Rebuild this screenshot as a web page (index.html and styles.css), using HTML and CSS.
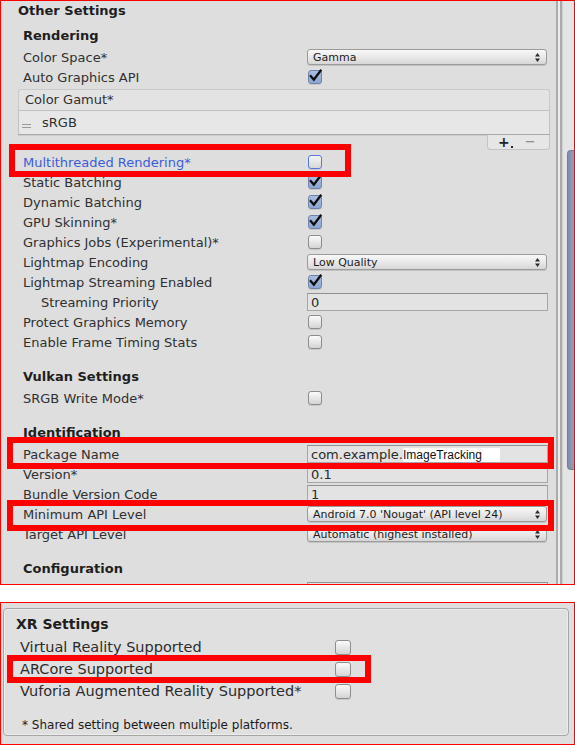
FILE: index.html
```html
<!DOCTYPE html>
<html>
<head>
<meta charset="utf-8">
<link rel="stylesheet" href="styles.css">
</head>
<body>
<div class="shot shot-top">
  <div class="inspector">
    <div class="title">Other Settings</div>
    <div class="sec first">Rendering</div>
    <div class="row"><span class="lbl">Color Space*</span><div class="dd"><span>Gamma</span><svg class="arr" viewBox="0 0 5 9" width="5" height="9"><polygon points="0,3.6 2.5,0 5,3.6"/><polygon points="0,5.4 2.5,9 5,5.4"/></svg></div></div>
    <div class="row"><span class="lbl">Auto Graphics API</span><span class="cb on"><svg viewBox="0 0 14 14" width="14" height="14"><path d="M2.8 7.2 L5.8 10.6 L12.6 1.6"/></svg></span></div>
    <div class="list">
      <div class="list-head">Color Gamut*</div>
      <div class="list-body"><span class="handle"></span><span>sRGB</span></div>
      <div class="list-foot"><span class="plus">+<i></i></span><span class="minus">−</span></div>
    </div>
    <div class="row"><span class="lbl blue">Multithreaded Rendering*</span><span class="cb focus"></span></div>
    <div class="row"><span class="lbl">Static Batching</span><span class="cb on"><svg viewBox="0 0 14 14" width="14" height="14"><path d="M2.8 7.2 L5.8 10.6 L12.6 1.6"/></svg></span></div>
    <div class="row"><span class="lbl">Dynamic Batching</span><span class="cb on"><svg viewBox="0 0 14 14" width="14" height="14"><path d="M2.8 7.2 L5.8 10.6 L12.6 1.6"/></svg></span></div>
    <div class="row"><span class="lbl">GPU Skinning*</span><span class="cb on"><svg viewBox="0 0 14 14" width="14" height="14"><path d="M2.8 7.2 L5.8 10.6 L12.6 1.6"/></svg></span></div>
    <div class="row"><span class="lbl">Graphics Jobs (Experimental)*</span><span class="cb"></span></div>
    <div class="row"><span class="lbl">Lightmap Encoding</span><div class="dd"><span>Low Quality</span><svg class="arr" viewBox="0 0 5 9" width="5" height="9"><polygon points="0,3.6 2.5,0 5,3.6"/><polygon points="0,5.4 2.5,9 5,5.4"/></svg></div></div>
    <div class="row"><span class="lbl">Lightmap Streaming Enabled</span><span class="cb on"><svg viewBox="0 0 14 14" width="14" height="14"><path d="M2.8 7.2 L5.8 10.6 L12.6 1.6"/></svg></span></div>
    <div class="row"><span class="lbl indent">Streaming Priority</span><div class="field">0</div></div>
    <div class="row"><span class="lbl">Protect Graphics Memory</span><span class="cb"></span></div>
    <div class="row"><span class="lbl">Enable Frame Timing Stats</span><span class="cb"></span></div>
    <div class="sec">Vulkan Settings</div>
    <div class="row"><span class="lbl">SRGB Write Mode*</span><span class="cb"></span></div>
    <div class="sec">Identification</div>
    <div class="row"><span class="lbl">Package Name</span><div class="field">com.example.<span class="sel">ImageTracking</span></div></div>
    <div class="row"><span class="lbl">Version*</span><div class="field">0.1</div></div>
    <div class="row"><span class="lbl">Bundle Version Code</span><div class="field">1</div></div>
    <div class="row"><span class="lbl">Minimum API Level</span><div class="dd"><span>Android 7.0 'Nougat' (API level 24)</span><svg class="arr" viewBox="0 0 5 9" width="5" height="9"><polygon points="0,3.6 2.5,0 5,3.6"/><polygon points="0,5.4 2.5,9 5,5.4"/></svg></div></div>
    <div class="row"><span class="lbl">Target API Level</span><div class="dd"><span>Automatic (highest installed)</span><svg class="arr" viewBox="0 0 5 9" width="5" height="9"><polygon points="0,3.6 2.5,0 5,3.6"/><polygon points="0,5.4 2.5,9 5,5.4"/></svg></div></div>
    <div class="sec conf">Configuration</div>
    <div class="row"><span class="lbl"></span><div class="field tall"></div></div>
  </div>
  <div class="scroll">
    <div class="sep"></div>
    <div class="track"><div class="thumb"></div></div>
  </div>
  <div class="mark m1"></div>
  <div class="mark m2"></div>
  <div class="mark m3"></div>
</div>
<div class="gap"></div>
<div class="shot shot-bottom">
  <div class="group">
    <div class="xr-head">XR Settings</div>
    <div class="xr-row"><span class="xr-lbl">Virtual Reality Supported</span><span class="cb big"></span></div>
    <div class="xr-row"><span class="xr-lbl">ARCore Supported</span><span class="cb big"></span></div>
    <div class="xr-row"><span class="xr-lbl">Vuforia Augmented Reality Supported*</span><span class="cb big"></span></div>
    <div class="note">* Shared setting between multiple platforms.</div>
  </div>
  <div class="mark m4"></div>
</div>
</body>
</html>
```
FILE: styles.css
```css
* { box-sizing: border-box; }
html, body { margin: 0; padding: 0; }
body {
  width: 575px;
  height: 745px;
  background: #ffffff;
  font-family: "DejaVu Sans", Verdana, sans-serif;
  color: #303030;
  overflow: hidden;
}
.shot {
  position: relative;
  border: 1px solid #ff0000;
  background: #dedede;
  overflow: hidden;
}
.shot-top {
  height: 585px;
  display: flex;
}
.gap { height: 17px; }
.shot-bottom {
  height: 143px;
  padding: 5px 5px 0 2px;
}

/* inspector */
.inspector {
  flex: 1;
  padding-left: 22px;
  font-size: 13px;
  min-width: 0;
}
.title {
  height: 19px;
  line-height: 19px;
  font-weight: bold;
  color: #1e1e1e;
  margin-left: -5px;
}
.sec {
  margin-top: 14px;
  height: 22px;
  padding-top: 1px;
  line-height: 20px;
  font-weight: bold;
  color: #1e1e1e;
}
.sec.first { margin-top: 5px; }
.row {
  display: flex;
  align-items: center;
  height: 20px;
}
.lbl {
  width: 284px;
  height: 20px;
  padding-top: 1px;
  flex-shrink: 0;
  white-space: nowrap;
  line-height: 20px;
}
.lbl.indent { padding-left: 18px; }
.lbl.blue { color: #3b5cd8; }

/* dropdown */
.dd {
  width: 240px;
  height: 16px;
  border: 1px solid #9b9b9b;
  border-radius: 3px;
  background: linear-gradient(#f8f8f8, #e6e6e6 60%, #d6d6d6);
  box-shadow: 0 1px 0 rgba(0, 0, 0, 0.12);
  display: flex;
  align-items: center;
  justify-content: space-between;
  padding: 0 6px 0 5px;
  font-size: 11px;
  color: #1c1c1c;
  white-space: nowrap;
}
.arr { fill: #2a2a2a; flex-shrink: 0; }

/* checkbox */
.cb {
  width: 14px;
  height: 14px;
  margin-left: 1px;
  border: 1px solid #8c8c8c;
  border-radius: 3px;
  background: linear-gradient(#fbfbfb, #d4d4d4);
  box-shadow: 0 1px 0 rgba(0, 0, 0, 0.1);
  position: relative;
  flex-shrink: 0;
}
.cb svg {
  position: absolute;
  left: -1px;
  top: -2px;
  overflow: visible;
}
.cb svg path {
  fill: none;
  stroke: #0e0e0e;
  stroke-width: 2.3;
  stroke-linecap: square;
}
.cb.on {
  border-color: #6f84a8;
  background: linear-gradient(#a9bde0, #8ca6d2);
}
.cb.focus {
  border: 1.5px solid #5778df;
  background: linear-gradient(#f4f4f4, #d8d8d8);
}
.cb.big {
  width: 16px;
  height: 15px;
  border-color: #8e8e8e;
}

/* text field */
.field {
  width: 241px;
  height: 18px;
  border: 1px solid #a6a6a6;
  border-top-color: #909090;
  background: #e3e3e3;
  padding-left: 3px;
  font-size: 13px;
  line-height: 17px;
  color: #2a2a2a;
  white-space: nowrap;
  overflow: hidden;
}
.field.tall { height: 20px; margin-top: 4px; }
.sel {
  background: #ffffff;
  font-family: "Liberation Sans", Arial, sans-serif;
  font-size: 12px;
  color: #111;
  padding-right: 18px;
  display: inline-block;
  line-height: 15px;
}

/* reorderable list */
.list {
  margin: 2px 0 2px -5px;
  width: 532px;
  display: flex;
  flex-direction: column;
}
.list-head {
  height: 21px;
  border: 1px solid #cacaca;
  border-bottom: none;
  border-radius: 3px 3px 0 0;
  background: #e3e3e3;
  padding-left: 6px;
  line-height: 20px;
}
.list-body {
  height: 25px;
  border: 1px solid #c2c2c2;
  border-bottom-color: #a9a9a9;
  background: #e7e7e7;
  display: flex;
  align-items: center;
  padding-left: 3px;
  gap: 11px;
  box-shadow: 0 1px 0 rgba(0, 0, 0, 0.08);
}
.handle {
  width: 9px;
  height: 4px;
  border-top: 1px solid #9a9a9a;
  border-bottom: 1px solid #9a9a9a;
  margin-top: 6px;
}
.list-foot {
  align-self: flex-end;
  width: 63px;
  height: 15px;
  border: 1px solid #c4c4c4;
  border-top: none;
  border-radius: 0 0 4px 4px;
  background: #e6e6e6;
  display: flex;
  align-items: center;
  padding-left: 10px;
  gap: 15px;
  line-height: 12px;
}
.plus {
  font-weight: bold;
  font-size: 14px;
  color: #222;
  position: relative;
}
.plus i {
  position: absolute;
  right: -3px;
  bottom: 0;
  width: 2px;
  height: 2px;
  background: #222;
}
.minus { color: #7a7a7a; font-size: 13px; }

/* scrollbar column */
.scroll {
  width: 20px;
  flex-shrink: 0;
  display: flex;
}
.sep {
  width: 7px;
  margin-left: 2px;
  border-left: 2px solid #ababab;
  border-right: 2px solid #ababab;
  background: #ebebeb;
}
.track {
  flex: 1;
  background: #e4e4e4;
  border-left: 1px solid #d0d0d0;
  padding-left: 4px;
}
.thumb {
  margin-top: 149px;
  height: 320px;
  width: 7px;
  background: linear-gradient(90deg, #7d8eac, #909fbb);
  border: 1px solid #6e7f9d;
  border-right: none;
  border-radius: 4px 0 0 4px;
}

/* bottom XR group */
.group {
  height: 128px;
  border: 1px solid #a6a6a6;
  border-radius: 4px;
  background: #e0e0e0;
  box-shadow: inset 0 0 0 1px #ececec;
  padding: 5px 0 0 0;
}
.xr-head {
  height: 20px;
  line-height: 20px;
  font-size: 14px;
  font-weight: bold;
  color: #1e1e1e;
  padding-left: 12px;
  margin-bottom: 2px;
}
.xr-row {
  display: flex;
  align-items: center;
  height: 22px;
}
.xr-lbl {
  width: 330px;
  padding-left: 16px;
  font-size: 14.5px;
  white-space: nowrap;
  flex-shrink: 0;
  color: #2c2c2c;
}
.note {
  margin-top: 14px;
  height: 18px;
  line-height: 18px;
  padding-left: 18px;
  font-size: 12px;
  color: #1a1a1a;
}

/* red annotation frames */
.mark {
  position: absolute;
  border: 6px solid #ff0000;
}
.m1 { left: 8px; top: 143px; width: 342px; height: 33px; }
.m2 { left: 6px; top: 436px; width: 547px; height: 32px; }
.m3 { left: 6px; top: 499px; width: 547px; height: 31px; }
.m4 { left: 6px; top: 52px; width: 364px; height: 28px; }
```
